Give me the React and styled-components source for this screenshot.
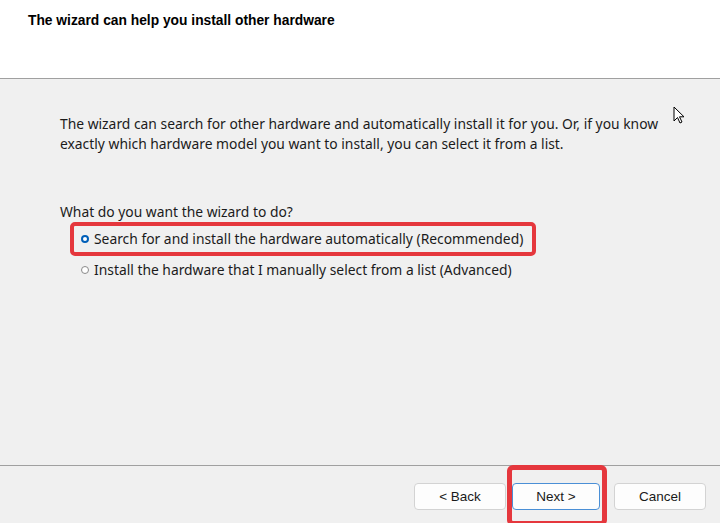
import React from "react";
import styled, { createGlobalStyle } from "styled-components";

const Global = createGlobalStyle`
  html, body {
    margin: 0;
    padding: 0;
    background: #ffffff;
  }
  #root {
    width: 720px;
    height: 523px;
  }
`;

const Window = styled.div`
  position: relative;
  width: 720px;
  height: 523px;
  display: flex;
  flex-direction: column;
  overflow: hidden;
  background: #f0f0f0;
`;

const Header = styled.header`
  height: 79px;
  flex-shrink: 0;
  background: #ffffff;
  border-bottom: 1px solid #a0a0a0;
  box-sizing: border-box;
  padding: 13px 0 0 28px;
`;

const Title = styled.h1`
  margin: 0;
  font-family: "Liberation Sans", Arial, sans-serif;
  font-weight: bold;
  font-size: 13.8px;
  color: #000000;
`;

const Body = styled.main`
  flex: 1;
  display: flex;
  flex-direction: column;
  align-items: flex-start;
  padding: 35px 0 0 60px;
  font-family: "Noto Sans", sans-serif;
  font-size: 13.85px;
  line-height: 20px;
  color: #1b1b1b;
`;

const Intro = styled.p`
  margin: 0 0 48px;
  white-space: nowrap;
`;

const Question = styled.div``;

const Option = styled.label`
  display: inline-flex;
  align-items: center;
  gap: 5px;
  margin-left: 10px;
  height: 34px;
  box-sizing: border-box;
  padding: 0 9px 0 7px;
  border: 4px solid ${(p) => (p.$highlight ? "#e5373d" : "transparent")};
  border-radius: 5px;
  margin-top: ${(p) => (p.$highlight ? "0" : "-3px")};
`;

const Radio = styled.span`
  width: 8px;
  height: 8px;
  border-radius: 50%;
  box-sizing: border-box;
  flex-shrink: 0;
  background: #ffffff;
  border: ${(p) => (p.$checked ? "2.5px solid #005fb8" : "1px solid #8a8a8a")};
`;

const Footer = styled.footer`
  height: 58px;
  flex-shrink: 0;
  border-top: 1px solid #a0a0a0;
  box-sizing: border-box;
  display: flex;
  justify-content: flex-end;
  align-items: flex-start;
  padding: 17px 14px 0 0;
`;

const Button = styled.button`
  width: ${(p) => p.$w}px;
  height: 27px;
  margin-left: ${(p) => p.$gap}px;
  background: #fdfdfd;
  border: 1px solid ${(p) => (p.$primary ? "#4a8fd6" : "#d3d3d3")};
  border-radius: 4px;
  font-family: "Liberation Sans", Arial, sans-serif;
  font-size: 13.5px;
  color: #1a1a1a;
  padding: 0;
`;

const Marked = styled.div`
  position: relative;
  margin-left: 6px;

  &::after {
    content: "";
    position: absolute;
    left: -5px;
    right: -7px;
    top: -18px;
    bottom: -16px;
    border: 5px solid #e5373d;
    border-radius: 6px;
    pointer-events: none;
  }
`;

const Cursor = styled.svg`
  position: absolute;
  left: 673px;
  top: 106px;
`;

export default function App() {
  return (
    <>
      <Global />
      <Window>
        <Header>
          <Title>The wizard can help you install other hardware</Title>
        </Header>
        <Body>
          <Intro>
            The wizard can search for other hardware and automatically install it for you. Or, if you know
            <br />
            exactly which hardware model you want to install, you can select it from a list.
          </Intro>
          <Question>What do you want the wizard to do?</Question>
          <Option $highlight>
            <Radio $checked />
            Search for and install the hardware automatically (Recommended)
          </Option>
          <Option>
            <Radio />
            Install the hardware that I manually select from a list (Advanced)
          </Option>
        </Body>
        <Footer>
          <Button $w={92} $gap={0}>&lt; Back</Button>
          <Marked>
            <Button $w={88} $gap={0} $primary>Next &gt;</Button>
          </Marked>
          <Button $w={92} $gap={14}>Cancel</Button>
        </Footer>
        <Cursor width="13" height="19" viewBox="0 0 13 19">
          <path
            d="M1 1 L1 15 L4.5 11.5 L7 17 L9 16 L6.5 10.8 L11 10.8 Z"
            fill="#ffffff"
            stroke="#000000"
            strokeWidth="1"
            strokeLinejoin="round"
          />
        </Cursor>
      </Window>
    </>
  );
}
